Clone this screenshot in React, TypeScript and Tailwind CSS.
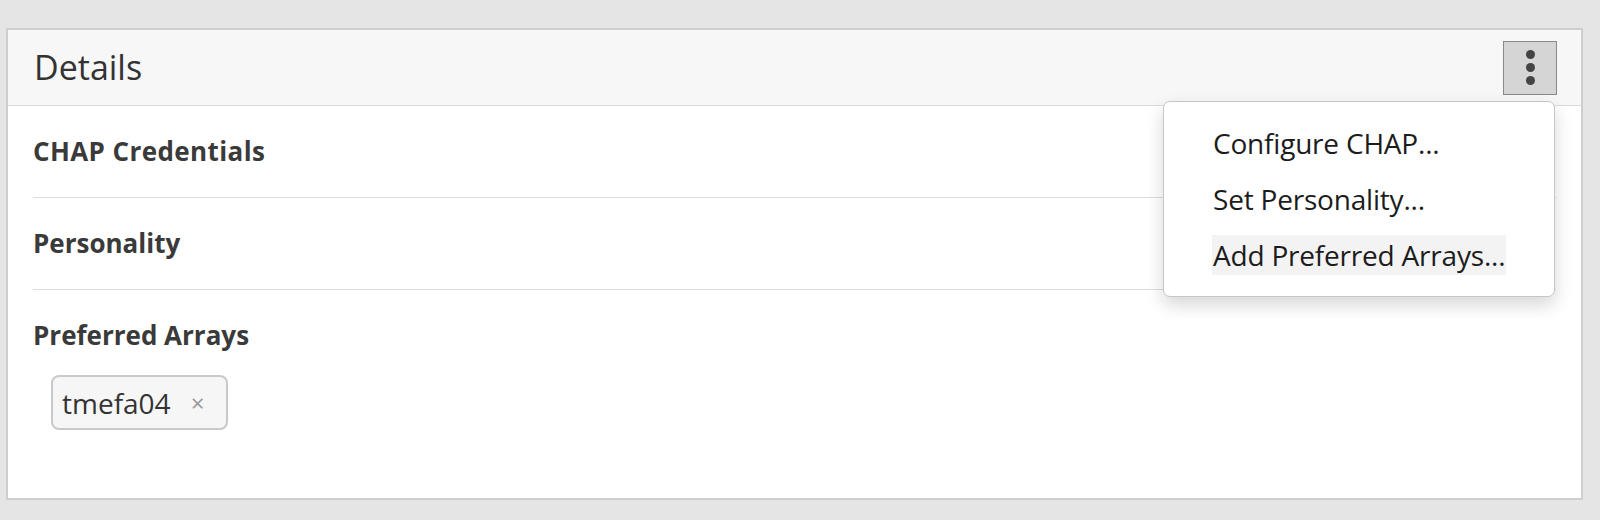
import React from 'react'

const FONT = { fontFamily: '"Open Sans", "Liberation Sans", sans-serif' }

const menuItems = [
  { label: 'Configure CHAP...', active: false },
  { label: 'Set Personality...', active: false },
  { label: 'Add Preferred Arrays...', active: true },
]

function KebabButton() {
  return (
    <button className="flex h-[54px] w-[54px] flex-col items-center justify-center gap-[4px] border border-[#8a8a8a] bg-[#d5d5d5]">
      <span className="h-[9px] w-[9px] rounded-full bg-[#444]" />
      <span className="h-[9px] w-[9px] rounded-full bg-[#444]" />
      <span className="h-[9px] w-[9px] rounded-full bg-[#444]" />
    </button>
  )
}

function Dropdown() {
  return (
    <div className="absolute right-[26px] top-[71px] w-[392px] rounded-[7px] border border-[#c6c6c6] bg-white py-[13px] shadow-[0_8px_18px_rgba(0,0,0,0.16)]">
      {menuItems.map((item) => (
        <div key={item.label} className="flex h-[56px] items-center pl-[48px]">
          <span
            className={
              'px-[1px] text-[28px] leading-[40px] tracking-[-0.2px] text-[#1c1c1c] ' +
              (item.active ? 'bg-[#f3f3f3]' : '')
            }
          >
            {item.label}
          </span>
        </div>
      ))}
    </div>
  )
}

export default function App() {
  return (
    <div className="h-[520px] w-full bg-[#e5e5e5] pl-[6px] pr-[17px] pt-[28px]" style={FONT}>
      <div className="relative h-[472px] border-2 border-[#cecece] bg-white">
        {/* header */}
        <div className="flex h-[76px] items-center justify-between border-b border-[#dcdcdc] bg-[#f7f7f7] pl-[26px] pr-[24px]">
          <h1 className="text-[34px] font-normal text-[#333]">Details</h1>
          <KebabButton />
        </div>

        {/* sections */}
        <div className="px-[25px]">
          <div className="flex h-[92px] items-center border-b border-[#dddddd]">
            <h2 className="text-[26px] font-bold tracking-[0.4px] text-[#3a3a3a]">CHAP Credentials</h2>
          </div>
          <div className="flex h-[92px] items-center border-b border-[#dddddd]">
            <h2 className="text-[26px] font-bold text-[#3a3a3a]">Personality</h2>
          </div>
          <div>
            <div className="flex h-[85px] items-center pt-[6px]">
              <h2 className="text-[26px] font-bold text-[#3a3a3a]">Preferred Arrays</h2>
            </div>
            <div className="ml-[18px] inline-flex h-[55px] items-center rounded-[8px] border-2 border-[#c9c9c9] bg-[#f6f6f6] pl-[9px] pr-[22px]">
              <span className="text-[28px] text-[#333]">tmefa04</span>
              <span className="ml-[20px] text-[24px] leading-none text-[#9a9a9a]">×</span>
            </div>
          </div>
        </div>

        <Dropdown />
      </div>
    </div>
  )
}
